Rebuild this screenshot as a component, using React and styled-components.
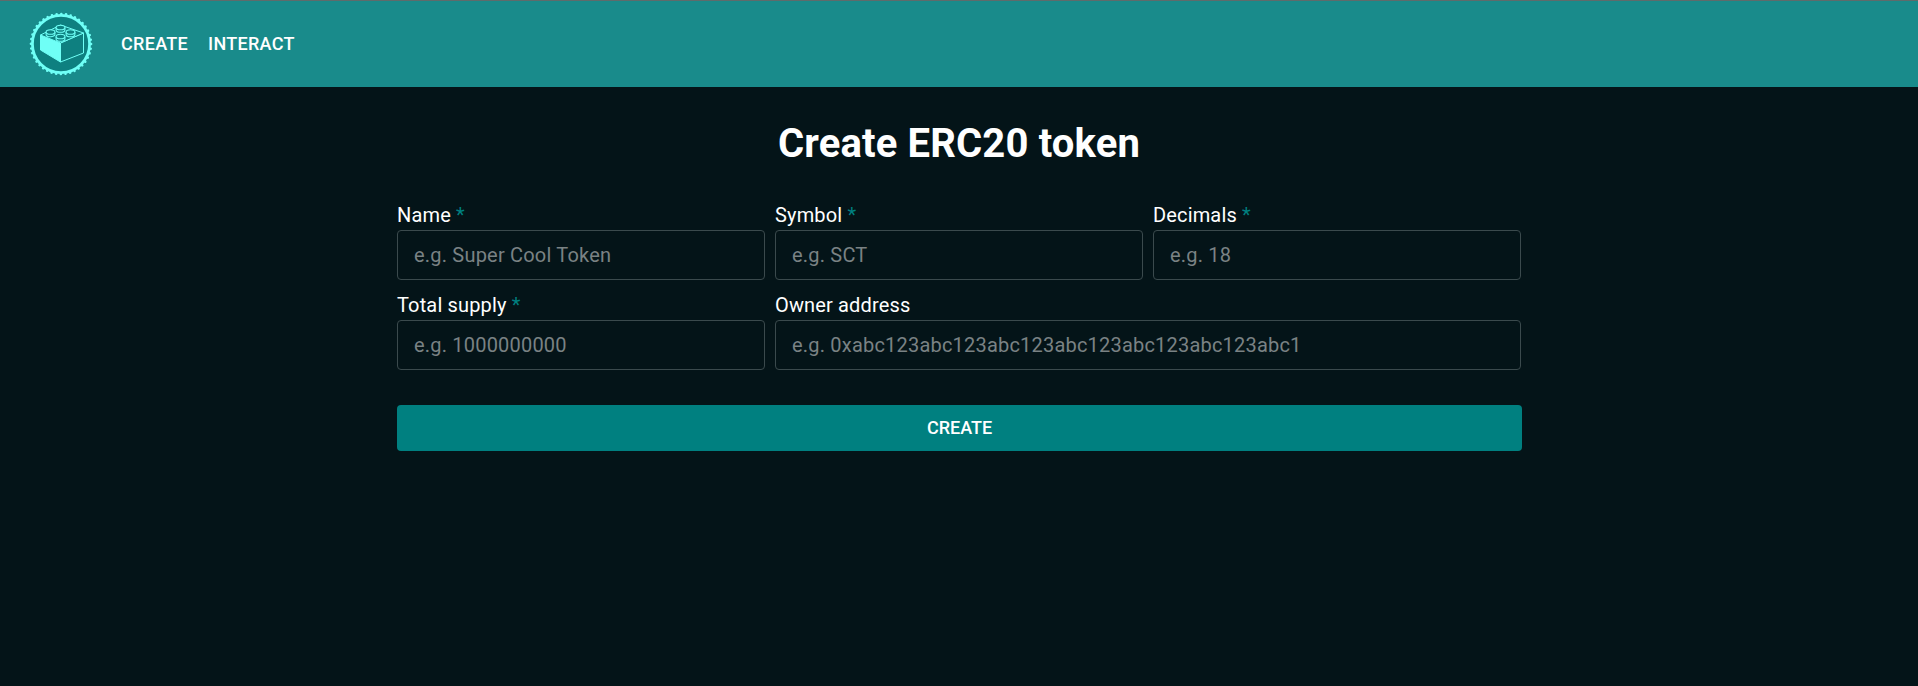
import React from "react";
import styled, { createGlobalStyle } from "styled-components";

const Global = createGlobalStyle`
  html, body { margin: 0; padding: 0; background: #041418; }
  body { font-family: Roboto, "Liberation Sans", sans-serif; color: #fff; min-height: 686px; }
  * { box-sizing: border-box; }
`;

const Header = styled.header`
  height: 87px;
  background: #198b8b;
  border-top: 1px solid #5f6b6b;
  display: flex;
  align-items: center;
  padding-left: 29px;
`;

const Logo = styled.svg`
  width: 64px;
  height: 64px;
  flex: none;
  display: block;
`;

const Nav = styled.nav`
  display: flex;
  gap: 20px;
  margin-left: 28px;
`;

const NavLink = styled.a`
  font-size: 18px;
  font-weight: 500;
  line-height: 24px;
  letter-spacing: 0.3px;
  color: #fff;
  text-transform: uppercase;
`;

const Main = styled.main`
  width: 1124px;
  margin: 0 auto;
`;

const Title = styled.h1`
  margin: 0;
  padding-top: 30px;
  font-size: 40px;
  line-height: 54px;
  letter-spacing: 0.15px;
  font-weight: 700;
  text-align: center;
`;

const Fields = styled.div`
  margin-top: 29px;
  display: grid;
  grid-template-columns: repeat(3, 368px);
  column-gap: 10px;
  row-gap: 10px;
`;

const Field = styled.label`
  display: flex;
  flex-direction: column;
  grid-column: span ${(p) => p.$span || 1};
  min-width: 0;
`;

const LabelText = styled.span`
  font-size: 20px;
  line-height: 30px;
  letter-spacing: 0.15px;
  font-weight: 400;
  color: #fff;
`;

const Star = styled.span`
  color: #008080;
`;

const Input = styled.input`
  height: 50px;
  width: 100%;
  background: transparent;
  border: 1px solid #3b4a4d;
  border-radius: 4px;
  padding: 0 16px;
  font-family: inherit;
  font-size: 20px;
  letter-spacing: 0.2px;
  color: #fff;
  outline: none;
  &::placeholder { color: #7a8284; opacity: 1; }
`;

const Submit = styled.button`
  display: block;
  width: calc(100% + 1px);
  margin-top: 35px;
  height: 46px;
  padding: 0 0 2px;
  background: #008080;
  border: 0;
  border-radius: 4px;
  font-family: inherit;
  font-size: 18px;
  font-weight: 500;
  color: #fff;
  text-transform: uppercase;
`;

const fields = [
  { label: "Name", required: true, placeholder: "e.g. Super Cool Token" },
  { label: "Symbol", required: true, placeholder: "e.g. SCT" },
  { label: "Decimals", required: true, placeholder: "e.g. 18" },
  { label: "Total supply", required: true, placeholder: "e.g. 1000000000" },
  { label: "Owner address", span: 2, placeholder: "e.g. 0xabc123abc123abc123abc123abc123abc123abc1" },
];

const C = "#6ffff6";
const D = "#0e8080";

const Stud = ({ x, y }) => (
  <g>
    <path d={`M${x - 4.4} ${y}v2.4a4.4 2.3 0 0 0 8.8 0V${y}`} fill={D} stroke={C} strokeWidth="1.1" />
    <ellipse cx={x} cy={y} rx="4.4" ry="2.3" fill={D} stroke={C} strokeWidth="1.1" />
  </g>
);

const BrickLogo = () => (
  <Logo viewBox="0 0 64 64">
    <circle cx="32" cy="32" r="28.6" fill={D} stroke={C} strokeWidth="2.8" />
    <circle cx="32" cy="32" r="30.1" fill="none" stroke={C} strokeWidth="2.5" strokeLinecap="round" strokeDasharray="0.1 4.63" />
    <path d="M11.5 23 L31.5 31 L31.5 50 L11.5 38 Z" fill={C} stroke={C} strokeWidth="1" strokeLinejoin="round" />
    <path d="M31.5 31 L54.5 21 L54.5 41 L31.5 50 Z" fill={D} stroke={C} strokeWidth="1" strokeLinejoin="round" />
    <path d="M11.5 23 L31.5 13 L54.5 21 L31.5 31 Z" fill={D} stroke={C} strokeWidth="1" strokeLinejoin="round" />
    <Stud x={31.5} y={15.5} />
    <Stud x={21.5} y={20} />
    <Stud x={41.5} y={20} />
    <Stud x={31.5} y={24.5} />
  </Logo>
);

export default function App() {
  return (
    <>
      <Global />
      <Header>
        <BrickLogo />
        <Nav>
          <NavLink>Create</NavLink>
          <NavLink>Interact</NavLink>
        </Nav>
      </Header>
      <Main>
        <Title>Create ERC20 token</Title>
        <form>
          <Fields>
            {fields.map((f) => (
              <Field key={f.label} $span={f.span}>
                <LabelText>
                  {f.label}
                  {f.required && <Star> *</Star>}
                </LabelText>
                <Input placeholder={f.placeholder} />
              </Field>
            ))}
          </Fields>
          <Submit type="button">Create</Submit>
        </form>
      </Main>
    </>
  );
}
